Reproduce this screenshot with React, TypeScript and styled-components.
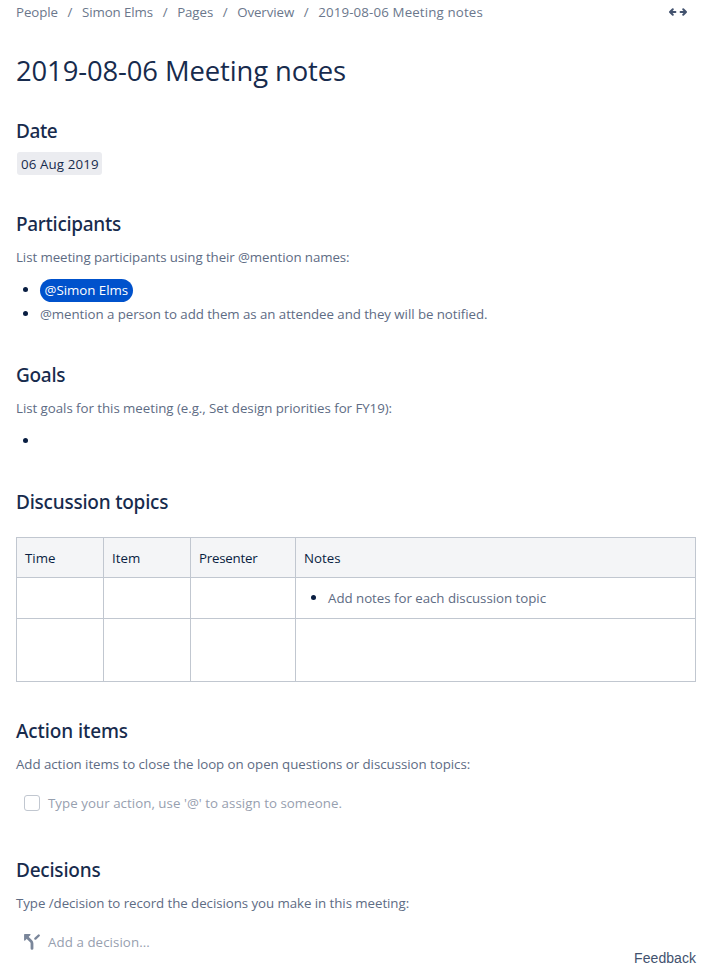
import React from "react";
import styled, { createGlobalStyle } from "styled-components";

const GlobalStyle = createGlobalStyle`
  * { box-sizing: border-box; }
  body {
    margin: 0;
    background: #fff;
    color: #172b4d;
    font: 400 13.3px/24px "Open Sans", "Noto Sans", sans-serif;
  }
`;

const Page = styled.main`
  position: relative;
  display: flex;
  flex-direction: column;
  width: 710px;
  height: 977px;
  padding: 0 14px 0 16px;
  overflow: hidden;
`;

const TopBar = styled.header`
  display: flex;
  justify-content: space-between;
  align-items: center;
  height: 24px;
  padding-right: 8px;
`;

const Breadcrumbs = styled.nav`
  display: flex;
  color: #6b778c;
`;

const Crumb = styled.span<{ $spacing?: number }>`
  letter-spacing: ${(p) => p.$spacing ?? -0.08}px;
  white-space: nowrap;

  &:not(:first-child)::before {
    content: "/";
    display: inline-block;
    width: 24px;
    text-align: center;
    letter-spacing: 0;
  }
`;

const Title = styled.h1`
  margin: 31px 0 0;
  font-size: 27.4px;
  line-height: 32px;
  font-weight: 400;
  letter-spacing: -0.1px;
  white-space: nowrap;
`;

const Section = styled.section<{ $gap?: number }>`
  display: flex;
  flex-direction: column;
  align-items: flex-start;
  margin-top: ${(p) => p.$gap ?? 37}px;
`;

const Heading = styled.h2<{ $spacing?: number }>`
  margin: 0;
  font: 500 19px/24px "Noto Sans", sans-serif;
  letter-spacing: ${(p) => p.$spacing ?? -0.3}px;
`;

const DateChip = styled.time`
  height: 23px;
  margin: 9px 0 0 1px;
  padding: 0 3px 0 4px;
  border-radius: 3px;
  background: #ebecf0;
  letter-spacing: 0.12px;
  line-height: 24px;
`;

const Hint = styled.p<{ $spacing?: number }>`
  margin: 9px 0;
  color: #5e6c84;
  letter-spacing: ${(p) => p.$spacing ?? -0.06}px;
  white-space: nowrap;
`;

const List = styled.ul`
  margin: 0;
  padding: 0;
  list-style: none;
`;

const Item = styled.li<{ $spacing?: number }>`
  display: flex;
  align-items: center;
  height: 24px;
  color: #5e6c84;
  letter-spacing: ${(p) => p.$spacing ?? -0.03}px;
  white-space: nowrap;

  &::before {
    content: "";
    flex: none;
    width: 5px;
    height: 5px;
    margin: 0 12px 1px 7px;
    border-radius: 50%;
    background: #091e42;
  }
`;

const Mention = styled.span`
  height: 23px;
  padding: 0 5px 0 4.5px;
  border-radius: 12px;
  background: #0052cc;
  color: #fff;
  line-height: 23px;
  letter-spacing: -0.02px;
`;

const Table = styled.table`
  width: 680px;
  height: 145px;
  margin-top: 23px;
  border-collapse: collapse;
  table-layout: fixed;
`;

const Column = styled.col<{ $width: number }>`
  width: ${(p) => p.$width}px;
`;

const Row = styled.tr<{ $height: number }>`
  height: ${(p) => p.$height}px;
`;

const HeadCell = styled.th<{ $spacing?: number }>`
  padding: 0 8px;
  border: 1px solid #c1c7d0;
  background: #f4f5f7;
  color: #091e42;
  font-weight: 400;
  text-align: left;
  letter-spacing: ${(p) => p.$spacing ?? 0}px;
`;

const Cell = styled.td`
  padding: 0 8px;
  border: 1px solid #c1c7d0;
`;

const Entry = styled.div<{ $spacing?: number }>`
  display: flex;
  align-items: center;
  gap: 8px;
  height: 24px;
  margin-top: 6px;
  padding-left: 8px;
  color: #97a0af;
  letter-spacing: ${(p) => p.$spacing ?? 0}px;
`;

const Checkbox = styled.span`
  width: 16px;
  height: 16px;
  border: 1px solid #c1c7d0;
  border-radius: 3px;
  background: #fff;
`;

const Feedback = styled.a`
  position: absolute;
  right: 14px;
  bottom: 9px;
  color: #42526e;
  font: 14px/20px "Liberation Sans", Arial, sans-serif;
  letter-spacing: 0.05px;
`;

const WidthIcon = () => (
  <svg width="20" height="10" viewBox="0 0 20 10" fill="none" stroke="#42526e" strokeWidth="2" strokeLinecap="round" strokeLinejoin="round">
    <path d="M7.4 5H2.4M4.8 2.2L2 5l2.8 2.8M12.6 5h5M15.2 2.2L18 5l-2.8 2.8" />
  </svg>
);

const DecisionIcon = () => (
  <svg width="16" height="16" viewBox="0 0 16 16" fill="none" stroke="#7a869a" strokeWidth="2.8" strokeLinecap="round" strokeLinejoin="round">
    <path d="M8 14.4V9.6Q8 8.2 7.1 7.3L3 3.2" />
    <path d="M11.4 4.6L14.7 1.5" strokeWidth="2.4" />
    <path d="M.7.7H6L.7 6z" fill="#7a869a" strokeWidth="1.2" />
  </svg>
);

export default function App() {
  return (
    <>
      <GlobalStyle />
      <Page>
        <TopBar>
          <Breadcrumbs>
            <Crumb>People</Crumb>
            <Crumb>Simon Elms</Crumb>
            <Crumb>Pages</Crumb>
            <Crumb>Overview</Crumb>
            <Crumb $spacing={0.14}>2019-08-06 Meeting notes</Crumb>
          </Breadcrumbs>
          <WidthIcon />
        </TopBar>

        <Title>2019-08-06 Meeting notes</Title>

        <Section $gap={32}>
          <Heading $spacing={-0.4}>Date</Heading>
          <DateChip>06 Aug 2019</DateChip>
        </Section>

        <Section>
          <Heading>Participants</Heading>
          <Hint $spacing={-0.085}>List meeting participants using their @mention names:</Hint>
          <List>
            <Item>
              <Mention>@Simon Elms</Mention>
            </Item>
            <Item $spacing={-0.06}>@mention a person to add them as an attendee and they will be notified.</Item>
          </List>
        </Section>

        <Section>
          <Heading>Goals</Heading>
          <Hint $spacing={-0.045}>List goals for this meeting (e.g., Set design priorities for FY19):</Hint>
          <List>
            <Item />
          </List>
        </Section>

        <Section>
          <Heading $spacing={-0.22}>Discussion topics</Heading>
          <Table>
            <colgroup>
              <Column $width={87} />
              <Column $width={87} />
              <Column $width={105} />
              <Column $width={400} />
            </colgroup>
            <thead>
              <Row $height={40}>
                <HeadCell>Time</HeadCell>
                <HeadCell>Item</HeadCell>
                <HeadCell $spacing={-0.24}>Presenter</HeadCell>
                <HeadCell>Notes</HeadCell>
              </Row>
            </thead>
            <tbody>
              <Row $height={41}>
                <Cell />
                <Cell />
                <Cell />
                <Cell>
                  <List>
                    <Item>Add notes for each discussion topic</Item>
                  </List>
                </Cell>
              </Row>
              <Row $height={63}>
                <Cell />
                <Cell />
                <Cell />
                <Cell />
              </Row>
            </tbody>
          </Table>
        </Section>

        <Section>
          <Heading $spacing={-0.1}>Action items</Heading>
          <Hint $spacing={-0.045}>Add action items to close the loop on open questions or discussion topics:</Hint>
          <Entry $spacing={0.04}>
            <Checkbox />
            Type your action, use '@' to assign to someone.
          </Entry>
        </Section>

        <Section $gap={43}>
          <Heading $spacing={-0.22}>Decisions</Heading>
          <Hint>Type /decision to record the decisions you make in this meeting:</Hint>
          <Entry $spacing={0.07}>
            <DecisionIcon />
            Add a decision...
          </Entry>
        </Section>

        <Feedback>Feedback</Feedback>
      </Page>
    </>
  );
}
